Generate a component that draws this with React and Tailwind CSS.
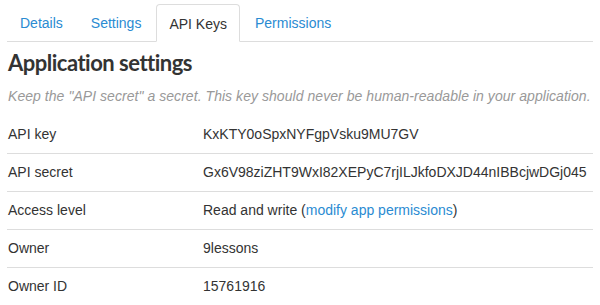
import React from 'react';

const tabs = ['Details', 'Settings', 'API Keys', 'Permissions'];

const rows = [
    { label: 'API key', value: 'KxKTY0oSpxNYFgpVsku9MU7GV' },
    { label: 'API secret', value: 'Gx6V98ziZHT9WxI82XEPyC7rjILJkfoDXJD44nIBBcjwDGj045' },
    { label: 'Access level', value: 'access' },
    { label: 'Owner', value: '9lessons' },
    { label: 'Owner ID', value: '15761916' },
];

export default function App() {
    return (
        <div className="w-[600px] h-[305px] overflow-hidden bg-white px-[7px] pt-[4px] font-['Liberation_Sans',Arial,sans-serif] text-[14px] text-[#333]">
            {/* Tabs */}
            <div className="flex border-b border-[#ddd]">
                {tabs.map((t) => (
                    <div
                        key={t}
                        className={
                            t === 'API Keys'
                                ? 'mr-[2px] -mb-px h-[38px] pt-[2px] px-[12px] flex items-center rounded-t-[4px] border border-[#ddd] border-b-white bg-white text-[#333]'
                                : 'mr-[2px] h-[37px] pt-[2px] px-[13px] flex items-center text-[#2a8bd2]'
                        }
                    >
                        {t}
                    </div>
                ))}
            </div>

            {/* Heading */}
            <h1 className="mt-[7px] pl-px font-['Lato',sans-serif] font-bold text-[22px] leading-[28px] tracking-[-0.5px] text-[#333]">
                Application settings
            </h1>
            <p className="mt-[9px] pl-px italic whitespace-nowrap text-[#999] text-[14px] leading-[20px] tracking-[0.05px]">
                Keep the "API secret" a secret. This key should never be human-readable in your application.
            </p>

            {/* Table */}
            <div className="mt-[9px]">
                {rows.map((r, i) => (
                    <div
                        key={r.label}
                        className={'flex items-center h-[38px] pl-px' + (i > 0 ? ' border-t border-[#ddd]' : '')}
                    >
                        <div className="w-[195px] shrink-0">{r.label}</div>
                        <div className="whitespace-nowrap">
                            {r.value === 'access' ? (
                                <span>
                                    Read and write (<span className="text-[#2a8bd2]">modify app permissions</span>)
                                </span>
                            ) : (
                                r.value
                            )}
                        </div>
                    </div>
                ))}
            </div>
        </div>
    );
}
